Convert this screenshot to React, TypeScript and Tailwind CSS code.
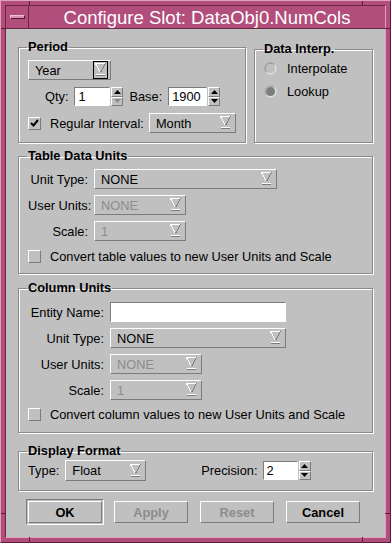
import React from 'react';

const raised = 'border border-t-white border-l-white border-b-[#7b7b7b] border-r-[#7b7b7b]';
const sunken = 'border border-t-[#7b7b7b] border-l-[#7b7b7b] border-b-white border-r-white';

function Arrow() {
  return (
    <svg width="11" height="14" viewBox="0 0 11 14" shapeRendering="crispEdges">
      <line x1="0.5" y1="0.5" x2="10.5" y2="0.5" stroke="#ffffff" />
      <line x1="0.5" y1="0.5" x2="5.5" y2="9.5" stroke="#ffffff" />
      <line x1="10.5" y1="0.5" x2="5.5" y2="9.5" stroke="#7b7b7b" />
      <line x1="1" y1="11.5" x2="10" y2="11.5" stroke="#ffffff" />
      <line x1="1" y1="12.5" x2="10" y2="12.5" stroke="#7b7b7b" />
    </svg>
  );
}

function Combo({ w, value, disabled, focus, h = 'h-[20px]' }: { w: string; value: string; disabled?: boolean; focus?: boolean; h?: string }) {
  return (
    <div className={`${raised} ${w} ${h} flex items-center justify-between pl-[6px] pr-[2px] ${disabled ? 'text-[#8c8c8c]' : 'text-black'}`}>
      <span>{value}</span>
      <div className={`flex items-center justify-center px-[1px] py-[1px] border ${focus ? 'border-black' : 'border-transparent'}`}>
        <Arrow />
      </div>
    </div>
  );
}

function Spin({ downDisabled }: { downDisabled?: boolean }) {
  return (
    <div className="flex flex-col w-[12px] h-[19px] ml-[1px]">
      <div className={`${raised} flex-1 flex items-center justify-center`}>
        <svg width="7" height="4" viewBox="0 0 7 4"><polygon points="0,4 3.5,0 7,4" fill="#000" /></svg>
      </div>
      <div className={`${raised} flex-1 flex items-center justify-center`}>
        <svg width="7" height="4" viewBox="0 0 7 4"><polygon points="0,0 7,0 3.5,4" fill={downDisabled ? '#8c8c8c' : '#000'} /></svg>
      </div>
    </div>
  );
}

function TextBox({ w, value }: { w: string; value?: string }) {
  return (
    <div className={`${sunken} ${w} h-[19px] bg-white flex items-center pl-[3px] text-black`}>
      {value}
    </div>
  );
}

function Check({ checked }: { checked?: boolean }) {
  return (
    <div className={`${raised} w-[13px] h-[13px] flex items-center justify-center shrink-0`}>
      {checked && (
        <svg width="9" height="8" viewBox="0 0 9 8">
          <path d="M1 4 L3.5 6.5 L8 1" stroke="#000" strokeWidth="2" fill="none" />
        </svg>
      )}
    </div>
  );
}

function Radio({ on }: { on?: boolean }) {
  return (
    <svg width="13" height="13" viewBox="0 0 13 13">
      {on && <circle cx="6.5" cy="6.5" r="4.5" fill="#7e7e7e" />}
      <path d="M2.6 10.4 A5.5 5.5 0 0 1 10.4 2.6" stroke={on ? '#a0a0a0' : '#8a8a8a'} fill="none" />
      <path d="M10.4 2.6 A5.5 5.5 0 0 1 2.6 10.4" stroke="#f2f2f2" fill="none" />
    </svg>
  );
}

function Group({ title, className, children }: { title: string; className?: string; children: React.ReactNode }) {
  return (
    <fieldset className={`border border-[#8a8a8a] shadow-[inset_1px_1px_0_#ffffff,1px_1px_0_#ffffff] px-[9px] m-0 min-w-0 ${className ?? ''}`}>
      <legend className="font-bold leading-[14px] px-[1px] -ml-[1px] text-black">{title}</legend>
      {children}
    </fieldset>
  );
}

function Btn({ label, disabled }: { label: string; disabled?: boolean }) {
  return (
    <div className={`${raised} w-[74px] h-[22px] flex items-center justify-center font-bold ${disabled ? 'text-[#8c8c8c]' : 'text-black'}`}>
      {label}
    </div>
  );
}

export default function App() {
  return (
    <div className="w-[391px] h-[543px] relative bg-[#b14e7b] border border-t-[#e39fc0] border-l-[#e39fc0] border-r-[#5c1d3a] border-b-[#5c1d3a] p-[4px] flex flex-col font-['Liberation_Sans',Arial,sans-serif] text-[12.8px] leading-[15px] whitespace-nowrap overflow-hidden select-none">
      {/* frame ticks */}
      <div className="absolute left-[28px] top-0 w-[1px] h-[5px] bg-[#5c1d3a]" />
      <div className="absolute left-[361px] top-0 w-[1px] h-[5px] bg-[#5c1d3a]" />
      <div className="absolute left-[28px] bottom-0 w-[1px] h-[5px] bg-[#5c1d3a]" />
      <div className="absolute left-[361px] bottom-0 w-[1px] h-[5px] bg-[#5c1d3a]" />
      <div className="absolute left-0 top-[27px] w-[5px] h-[1px] bg-[#5c1d3a]" />
      <div className="absolute right-0 top-[27px] w-[5px] h-[1px] bg-[#5c1d3a]" />
      <div className="absolute left-0 top-[512px] w-[5px] h-[1px] bg-[#5c1d3a]" />
      <div className="absolute right-0 top-[512px] w-[5px] h-[1px] bg-[#5c1d3a]" />

      <div className="flex-1 min-h-0 flex flex-col border border-t-[#6a2646] border-l-[#6a2646] border-r-[#e39fc0] border-b-[#e39fc0]">
        {/* Title bar */}
        <div className="h-[23px] shrink-0 flex border-b border-[#6a2646]">
          <div className="w-[23px] flex items-center justify-center border-r border-[#6a2646]">
            <div className="w-[15px] h-[4px] bg-[#d98db0] border border-t-[#f0c0d8] border-l-[#f0c0d8] border-b-[#4e1630] border-r-[#4e1630]" />
          </div>
          <div className="flex-1 flex items-center justify-center text-white text-[18.5px] leading-none pt-[2px]">
            Configure Slot: DataObj0.NumCols
          </div>
        </div>

        {/* Body */}
        <div className="flex-1 min-h-0 bg-[#c0c0c0] px-[12px] pt-[11px] flex flex-col text-black">
          <div className="flex gap-[8px] items-stretch">
            <Group title="Period" className="w-[228px] pt-[6px] pb-[9px]">
              <Combo w="w-[83px]" value="Year" focus />
              <div className="flex items-center mt-[7px] ml-[17px] h-[19px]">
                <span className="mr-[6px]">Qty:</span>
                <TextBox w="w-[36px]" value="1" />
                <Spin downDisabled />
                <span className="ml-[6px] mr-[6px]">Base:</span>
                <TextBox w="w-[39px]" value="1900" />
                <Spin />
              </div>
              <div className="flex items-center mt-[7px]">
                <Check checked />
                <span className="ml-[9px] mr-[5px]">Regular Interval:</span>
                <Combo w="w-[88px]" value="Month" />
              </div>
            </Group>
            <Group title="Data Interp." className="flex-1 mt-[2px] pt-[6px]">
              <div className="flex items-center h-[13px]">
                <Radio />
                <span className="ml-[10px]">Interpolate</span>
              </div>
              <div className="flex items-center h-[13px] mt-[10px]">
                <Radio on />
                <span className="ml-[10px]">Lookup</span>
              </div>
            </Group>
          </div>

          <Group title="Table Data Units" className="mt-[6px] pt-[6px] pb-[9px]">
            <div className="grid grid-cols-[60px_auto] gap-x-[6px] gap-y-[6px] justify-start items-center">
              <span className="text-right">Unit Type:</span>
              <Combo w="w-[183px]" value="NONE" />
              <span className="text-right">User Units:</span>
              <Combo w="w-[92px]" value="NONE" disabled />
              <span className="text-right">Scale:</span>
              <Combo w="w-[92px]" value="1" disabled />
            </div>
            <div className="flex items-center mt-[8px]">
              <Check />
              <span className="ml-[9px]">Convert table values to new User Units and Scale</span>
            </div>
          </Group>

          <Group title="Column Units" className="mt-[7px] pt-[7px] pb-[10px]">
            <div className="grid grid-cols-[76px_auto] gap-x-[6px] gap-y-[6px] justify-start items-center">
              <span className="text-right">Entity Name:</span>
              <div className={`${sunken} w-[176px] h-[20px] bg-white`} />
              <span className="text-right">Unit Type:</span>
              <Combo w="w-[176px]" value="NONE" />
              <span className="text-right">User Units:</span>
              <Combo w="w-[92px]" value="NONE" disabled />
              <span className="text-right">Scale:</span>
              <Combo w="w-[92px]" value="1" disabled />
            </div>
            <div className="flex items-center mt-[7px]">
              <Check />
              <span className="ml-[9px]">Convert column values to new User Units and Scale</span>
            </div>
          </Group>

          <Group title="Display Format" className="mt-[11px] pt-[2px] pb-[9px]">
            <div className="flex items-center">
              <span className="mr-[6px]">Type:</span>
              <Combo w="w-[81px]" h="h-[21px]" value="Float" />
              <span className="ml-[55px] mr-[5px]">Precision:</span>
              <TextBox w="w-[35px]" value="2" />
              <Spin />
            </div>
          </Group>

          <div className="flex items-center mt-[8px] pl-[8px]">
            <div className={`${sunken} p-[1px]`}>
              <Btn label="OK" />
            </div>
            <div className="ml-[10px]"><Btn label="Apply" disabled /></div>
            <div className="ml-[12px]"><Btn label="Reset" disabled /></div>
            <div className="ml-[12px]"><Btn label="Cancel" /></div>
          </div>
        </div>
      </div>
    </div>
  );
}
